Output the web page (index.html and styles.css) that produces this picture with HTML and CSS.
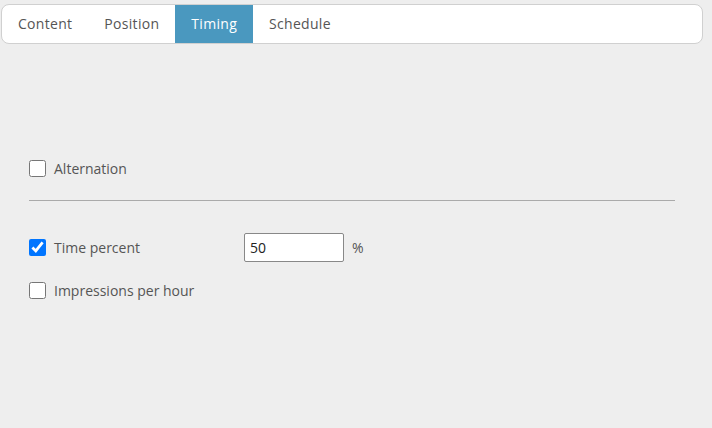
FILE: index.html
```html
<!DOCTYPE html>
<html>
<head>
<meta charset="utf-8">
<link rel="stylesheet" href="styles.css">
</head>
<body>
<div class="page">
  <nav class="tabs">
    <span class="tab">Content</span>
    <span class="tab">Position</span>
    <span class="tab active">Timing</span>
    <span class="tab">Schedule</span>
  </nav>
  <div class="panel">
    <label class="row first"><input type="checkbox" class="cb"><span>Alternation</span></label>
    <hr class="sep">
    <div class="row field">
      <label class="lbl"><input type="checkbox" class="cb" checked><span>Time percent</span></label>
      <input type="text" class="num" value="50">
      <span class="unit">%</span>
    </div>
    <label class="row"><input type="checkbox" class="cb"><span>Impressions per hour</span></label>
  </div>
</div>
</body>
</html>
```
FILE: styles.css
```css
html, body {
  margin: 0;
  padding: 0;
  background: #eeeeee;
}
body {
  font-family: "Open Sans", "Noto Sans", sans-serif;
  font-size: 14px;
  color: #555;
  width: 712px;
  height: 428px;
  overflow: hidden;
}
.page {
  padding: 4px 8px 0 1px;
}
.tabs {
  display: flex;
  height: 38px;
  width: 700px;
  background: #fff;
  border: 1px solid #d0d0d0;
  border-radius: 8px;
  overflow: hidden;
}
.tab {
  display: flex;
  align-items: center;
  padding: 0 16px 2px;
  letter-spacing: 0.3px;
  color: #555;
}
.tab.active {
  background: #4a98bf;
  color: #fff;
}
.panel {
  padding: 114px 0 0 28px;
  width: 646px;
}
.row {
  display: flex;
  align-items: center;
  height: 20px;
}
.cb {
  width: 17px;
  height: 17px;
  margin: 0 8px 0 0;
}
.sep {
  border: none;
  border-top: 1px solid #aaa;
  margin: 22px 0 0 0;
}
.field {
  margin-top: 32px;
  height: 29px;
}
.lbl {
  display: flex;
  align-items: center;
  width: 215px;
}
.num {
  box-sizing: border-box;
  width: 100px;
  height: 29px;
  border: 1px solid #888;
  border-radius: 2px;
  padding: 0 5px;
  font-family: "Open Sans", "Noto Sans", sans-serif;
  font-size: 14px;
  color: #222;
  margin: 0;
}
.unit {
  margin-left: 8px;
}
.row.field + .row {
  margin-top: 18px;
}
```
